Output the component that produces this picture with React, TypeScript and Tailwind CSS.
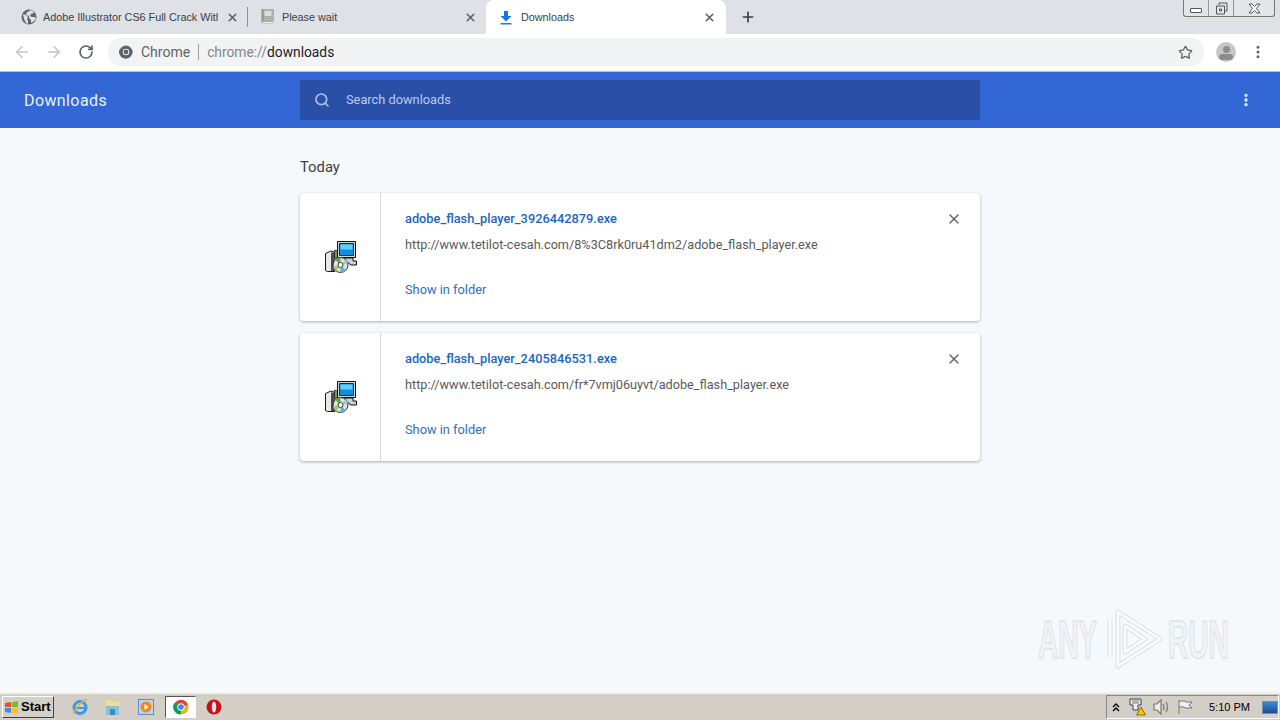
import { ArrowLeft, ArrowRight, RotateCw, Star, MoreVertical, Search, X, Plus } from "lucide-react";

const DOWNLOADS = [
  { name: "adobe_flash_player_3926442879.exe", url: "http://www.tetilot-cesah.com/8%3C8rk0ru41dm2/adobe_flash_player.exe" },
  { name: "adobe_flash_player_2405846531.exe", url: "http://www.tetilot-cesah.com/fr*7vmj06uyvt/adobe_flash_player.exe" },
];

function GlobeIcon() {
  return (
    <svg width="16" height="16" viewBox="0 0 16 16" className="shrink-0">
      <circle cx="8" cy="8" r="7.500" fill="#5f6368" />
      <path d="M2 5l3 1 2 2-1 2 1 2v3l-2-1-2-4zM9 1l3 1 1 2-3 1-1 2 2 1 3 0 1 2-3 3-2 1 0-3-2-2 0-2-3-1 1-3 3-1z" fill="#dee1e6" />
    </svg>
  );
}

function BookIcon() {
  return (
    <svg width="15" height="16" viewBox="0 0 15 16" className="shrink-0">
      <path d="M1 0h13v15H2.500L1 13.500z" fill="#b0b0b0" />
      <path d="M4.500 2h7v5h-7z" fill="#dedede" />
      <path d="M2 13h12v1.500H2z" fill="#e8e8e8" />
      <path d="M3 0v12.500" stroke="#858585" />
    </svg>
  );
}

function DownloadTabIcon() {
  return (
    <svg width="12" height="14" viewBox="0 0 12 14" className="shrink-0">
      <path d="M4 0h4v5h3.500L6 10.500.500 5H4z" fill="#1a73e8" />
      <path d="M.500 12h11v1.500H.500z" fill="#1a73e8" />
    </svg>
  );
}

function InstallerIcon() {
  return (
    <svg width="32" height="32" viewBox="0 0 32 32" className="ml-[1px]">
      {/* box */}
      <path d="M.500 12.500L6 10l4 1.500v19H2.500l-2-1z" fill="#e8e8e8" stroke="#1a1a1a" />
      <path d="M6 11.500h3.500v18.500H6z" fill="#4d4d4d" />
      <path d="M9.500 9l4 1v7h-4z" fill="#8e8b55" stroke="#1a1a1a" strokeWidth="0.700" />
      {/* monitor */}
      <path d="M12.500.500h18v16h-18z" fill="#d6d6d6" stroke="#111" />
      <path d="M14.500 2.500h14v12h-14z" fill="#0e8fe0" stroke="#0a3161" />
      <path d="M15.500 3.500h12v5h-12z" fill="#63cdf6" />
      <path d="M17 17h11v3h3.500v4H26z" fill="#cfcfcf" stroke="#111" />
      {/* disc */}
      <circle cx="15.500" cy="24" r="7.500" fill="#d6e6da" stroke="#2c352c" />
      <path d="M15.500 24L10 18.500a8 8 0 0 1 5.500-2z" fill="#5da653" />
      <path d="M15.500 24l5.500 5.500a8 8 0 0 1-5.500 2z" fill="#60b3cf" />
      <path d="M15.500 24l-7.500 2a8 8 0 0 0 3 4z" fill="#a9cb58" />
      <path d="M15.500 24l7.500-2a8 8 0 0 0-2-3.500z" fill="#9dbfe0" />
      <circle cx="15.500" cy="24" r="2.500" fill="#fff" stroke="#3c3c3c" />
    </svg>
  );
}

function ChromeLogo({ size, mono }: { size: number; mono?: boolean }) {
  const [a, b, c, d] = mono ? ["#5f6368", "#5f6368", "#5f6368", "#5f6368"] : ["#db4437", "#f4b400", "#0f9d58", "#4285f4"];
  return (
    <svg width={size} height={size} viewBox="0 0 24 24">
      <circle cx="12" cy="12" r="11" fill={a} />
      <path d="M12 12L22.500 8.500A11 11 0 0 1 12 23z" fill={b} />
      <path d="M12 12L12 23A11 11 0 0 1 2 6z" fill={c} />
      <circle cx="12" cy="12" r="5.500" fill="#fff" />
      <circle cx="12" cy="12" r="4.200" fill={d} />
    </svg>
  );
}

function TaskbarIcons() {
  return (
    <div className="flex items-center h-full">
      {/* IE */}
      <div className="w-[33px] flex justify-center">
        <svg width="18" height="18" viewBox="0 0 18 18">
          <circle cx="9" cy="9.500" r="6" fill="none" stroke="#3b9ae0" strokeWidth="3" />
          <path d="M3 10h12" stroke="#3b9ae0" strokeWidth="2" />
          <path d="M2 16C6 8 11 3 16 1" fill="none" stroke="#e3b23c" strokeWidth="1.500" />
        </svg>
      </div>
      {/* Explorer */}
      <div className="w-[33px] flex justify-center">
        <svg width="17" height="17" viewBox="0 0 17 17">
          <path d="M2 1h6l1 2h6v12H2z" fill="#f2dd94" />
          <path d="M2 7h13v9H2z" fill="#8cc0d8" />
          <path d="M6 10h5v6H6z" fill="#3f8cbd" />
        </svg>
      </div>
      {/* Media player */}
      <div className="w-[33px] flex justify-center">
        <svg width="16" height="16" viewBox="0 0 16 16">
          <rect x="0.500" y="0.500" width="15" height="15" fill="#bcd4ee" stroke="#5b8fc7" />
          <circle cx="8" cy="8" r="5.500" fill="#ee8a1c" />
          <path d="M6.500 5l4 3-4 3z" fill="#fff" />
        </svg>
      </div>
      {/* Chrome active */}
      <div className="ml-[3px] w-[31px] h-[22px] flex items-center justify-center bg-white border border-t-[#555] border-l-[#555] border-b-white border-r-white">
        <ChromeLogo size={16} />
      </div>
      {/* Opera */}
      <div className="w-[35px] flex justify-center">
        <svg width="16" height="16" viewBox="0 0 16 16">
          <circle cx="8" cy="8" r="7.500" fill="#c4121a" />
          <ellipse cx="8" cy="8" rx="2.200" ry="5.500" fill="#f6e3e3" />
        </svg>
      </div>
    </div>
  );
}

function DownloadCard({ name, url }: { name: string; url: string }) {
  return (
    <div className="flex h-[128px] bg-white rounded-[4px] shadow-[0_1px_3px_rgba(60,64,67,0.4)]">
      <div className="w-[81px] shrink-0 flex items-center justify-center border-r border-[#d8d8d8]">
        <InstallerIcon />
      </div>
      <div className="flex-1 flex flex-col pl-6 pr-[18px] pt-[18px]">
        <div className="flex justify-between items-center h-[16px]">
          <span className="text-[12.800px] font-medium leading-[16px] text-[#1a66c4]">{name}</span>
          <X size={16} strokeWidth={2} className="text-[#5f6368]" />
        </div>
        <span className="mt-[10px] text-[12.700px] leading-[16px] text-[#5a5a5a]">{url}</span>
        <span className="mt-[29px] text-[12.800px] leading-[16px] text-[#2f6fc4]">Show in folder</span>
      </div>
    </div>
  );
}

export default function App() {
  return (
    <div className="w-[1280px] h-[720px] flex flex-col overflow-hidden font-['Roboto',sans-serif] bg-[#f6f9fc]">
      {/* tab strip */}
      <div className="h-[34px] shrink-0 bg-[#dee1e6] flex pl-2 relative font-['Liberation_Sans',sans-serif]">
        <div className="w-[239px] h-full flex items-center pl-[13px] pr-[8px] gap-[6px]">
          <GlobeIcon />
          <span className="w-[175px] text-[10.800px] text-[#3c4043] whitespace-nowrap overflow-hidden shrink-0">
            Adobe Illustrator CS6 Full Crack With
          </span>
          <X size={13} strokeWidth={3} className="text-[#5f6368] ml-[2px] shrink-0" />
        </div>
        <div className="w-px h-[20px] mt-[7px] bg-[#8f9297]" />
        <div className="w-[238px] h-full flex items-center pl-[12px] pr-[9px] gap-[7px]">
          <BookIcon />
          <span className="flex-1 text-[10.800px] text-[#3c4043]">Please wait</span>
          <X size={13} strokeWidth={3} className="text-[#5f6368]" />
        </div>
        <div className="w-[240px] h-[36px] bg-white rounded-t-[8px] flex items-center pl-[14px] pr-[10px] gap-[9px]">
          <DownloadTabIcon />
          <span className="flex-1 text-[10.800px] text-[#3c4043] pb-[2px]">Downloads</span>
          <X size={13} strokeWidth={3} className="text-[#5f6368] mb-[2px]" />
        </div>
        <div className="ml-[14px] h-full flex items-center">
          <Plus size={16} strokeWidth={2.500} className="text-[#3c4043]" />
        </div>
        {/* window controls */}
        <div className="absolute top-0 right-[5px] w-[92px] h-[17px] flex border border-t-0 border-[#777] rounded-b-[3px] bg-[#e3e5e9]">
          <div className="w-[25px] flex items-center justify-center border-r border-[#999]">
            <div className="w-[12px] h-[5px] mt-[4px] border border-[#555] rounded-[1px] bg-white" />
          </div>
          <div className="w-[25px] flex items-center justify-center border-r border-[#999]">
            <svg width="13" height="13" viewBox="0 0 13 13" fill="none" stroke="#555">
              <path d="M4 3V1h8v8h-2M1.500 4h8v8h-8z" />
              <path d="M4.500 7h2v2h-2z" />
            </svg>
          </div>
          <div className="flex-1 flex items-center justify-center">
            <svg width="13" height="11" viewBox="0 0 13 11" fill="#fff" stroke="#555">
              <path d="M1 1h3l2.500 2.500L9 1h3L8.500 5.500 12 10H9L6.500 7.500 4 10H1l3.500-4.500z" />
            </svg>
          </div>
        </div>
      </div>

      {/* toolbar */}
      <div className="h-[38px] shrink-0 bg-white border-b border-[#bcc1cc] flex items-center pb-[1px]">
        <div className="w-[108px] flex items-center pl-[13px] gap-[14px] shrink-0">
          <ArrowLeft size={18} className="text-[#c1c4c9]" />
          <ArrowRight size={18} className="text-[#c1c4c9]" />
          <RotateCw size={16} strokeWidth={2.500} className="text-[#5f6368] ml-[1px]" />
        </div>
        <div className="w-[1096px] h-[28px] bg-[#f1f3f4] rounded-full flex items-center pl-[11px] pr-[11px] shrink-0">
          <ChromeLogo size={14} mono />
          <span className="ml-[8px] text-[14px] text-[#5f6368]">Chrome</span>
          <div className="w-px h-[16px] bg-[#9aa0a6] mx-[8px]" />
          <span className="text-[13.800px] text-[#80868b]">
            chrome://<span className="text-[#202124]">downloads</span>
          </span>
          <Star size={15} strokeWidth={2} className="ml-auto text-[#5f6368]" />
        </div>
        <div className="w-[20px] h-[20px] ml-[12px] rounded-full bg-[#c6c6c6] flex flex-col items-center justify-end overflow-hidden shrink-0">
          <div className="w-[7px] h-[7px] rounded-full bg-[#8d8d8d]" />
          <div className="w-[14px] h-[6px] mt-[1px] mb-[2px] rounded-full bg-[#8d8d8d]" />
        </div>
        <MoreVertical size={16} strokeWidth={2.500} className="ml-[14px] text-[#5f6368] shrink-0" />
      </div>

      {/* page header */}
      <div className="h-[56px] shrink-0 bg-[#3367d6] flex items-center">
        <div className="w-[300px] pl-6 pt-[1px] text-[16px] text-[#e8f0fe] tracking-[0.4px]">Downloads</div>
        <div className="w-[680px] h-[40px] bg-[#2a4fa6] flex items-center pl-[14px] gap-[16px]">
          <Search size={16} strokeWidth={2.500} className="text-[#a9c0ee]" />
          <span className="text-[12.800px] text-[#b9cbef]">Search downloads</span>
        </div>
        <MoreVertical size={16} strokeWidth={3} className="ml-[258px] text-[#e8f0fe]" />
      </div>

      {/* list */}
      <div className="flex-1 min-h-0 relative pl-[300px]">
        <div className="w-[680px] pt-[30px] flex flex-col">
          <div className="text-[14.800px] leading-[18px] text-[#3c4043] mb-[17px]">Today</div>
          <div className="flex flex-col gap-3">
            {DOWNLOADS.map((d) => (
              <DownloadCard key={d.name} name={d.name} url={d.url} />
            ))}
          </div>
        </div>
        {/* watermark */}
        <div className="absolute left-[1038px] top-[480px] flex items-center font-['Liberation_Sans',sans-serif] font-bold">
          <span className="w-[67px] text-[54px] leading-none text-[#f1f3f5] [-webkit-text-stroke:1.500px_#dfe3e6] scale-x-[0.52] origin-left">ANY</span>
          <svg width="60" height="62" viewBox="0 0 60 62" fill="none">
            <path d="M5 12v38M13 4l42 27-42 27zM20 18l20 13-20 13z" stroke="#dfe3e6" strokeWidth="5" strokeLinejoin="round" />
            <path d="M5 12v38M13 4l42 27-42 27zM20 18l20 13-20 13z" stroke="#fbfcfd" strokeWidth="2.500" strokeLinejoin="round" />
          </svg>
          <span className="ml-[3px] w-[64px] text-[54px] leading-none text-[#f1f3f5] [-webkit-text-stroke:1.500px_#dfe3e6] scale-x-[0.52] origin-left">RUN</span>
        </div>
      </div>

      {/* taskbar */}
      <div className="h-[28px] shrink-0 bg-[#d4cfc6] border-t-2 border-[#f1efea] flex items-center font-['Liberation_Sans',sans-serif]">
        <div className="ml-[2px] w-[52px] h-[22px] bg-[#d4d0c8] border border-t-white border-l-white border-r-[#404040] border-b-[#404040] flex items-center pl-[1px] gap-[2px]">
          <svg width="15" height="15" viewBox="0 0 15 15">
            <path d="M1 3l6-1v5H1z" fill="#e8502a" />
            <path d="M8 2l6-1v6H8z" fill="#7cb93a" />
            <path d="M1 8h6v5l-6-1z" fill="#3d8ed8" />
            <path d="M8 8h6v6l-6-1z" fill="#f2c230" />
          </svg>
          <span className="text-[13px] font-bold text-black">Start</span>
        </div>
        <div className="ml-[9px] h-full flex items-center"><TaskbarIcons /></div>
        <div className="ml-auto mr-[1px] w-[173px] h-[24px] border border-t-[#888] border-l-[#888] border-r-white border-b-white flex items-center pl-[5px]">
          <svg width="8" height="9" viewBox="0 0 8 9" fill="none" stroke="#000" strokeWidth="1.400">
            <path d="M1 4l3-3 3 3M1 8l3-3 3 3" />
          </svg>
          <svg className="ml-[9px]" width="18" height="18" viewBox="0 0 18 18">
            <path d="M1 1h11v6H9v5H4V7H1z" fill="#eee" stroke="#444" />
            <path d="M3 3h7M3 5h7" stroke="#777" />
            <path d="M12 9l-4.500 8h9z" fill="#f5c800" stroke="#8a7000" />
          </svg>
          <svg className="ml-[6px]" width="17" height="16" viewBox="0 0 17 16" fill="#eee" stroke="#777" strokeWidth="1.200">
            <path d="M1 5h3l4-4v14l-4-4H1z" />
            <path d="M10 5q2 3 0 6M13 3q3 5 0 10" fill="none" />
          </svg>
          <svg className="ml-[7px]" width="17" height="16" viewBox="0 0 17 16" fill="#eee" stroke="#777">
            <path d="M2 1v14M2 2h6l1 1h6l-3 3 3 3H8L7 8H2" />
          </svg>
          <span className="ml-[15px] text-[11px] text-black whitespace-nowrap">5:10 PM</span>
          <div className="ml-[12px] w-[16px] h-[13px] bg-gradient-to-b from-[#3f87d6] to-[#1c4f95] border border-[#6d8fb5]" />
        </div>
      </div>
    </div>
  );
}
